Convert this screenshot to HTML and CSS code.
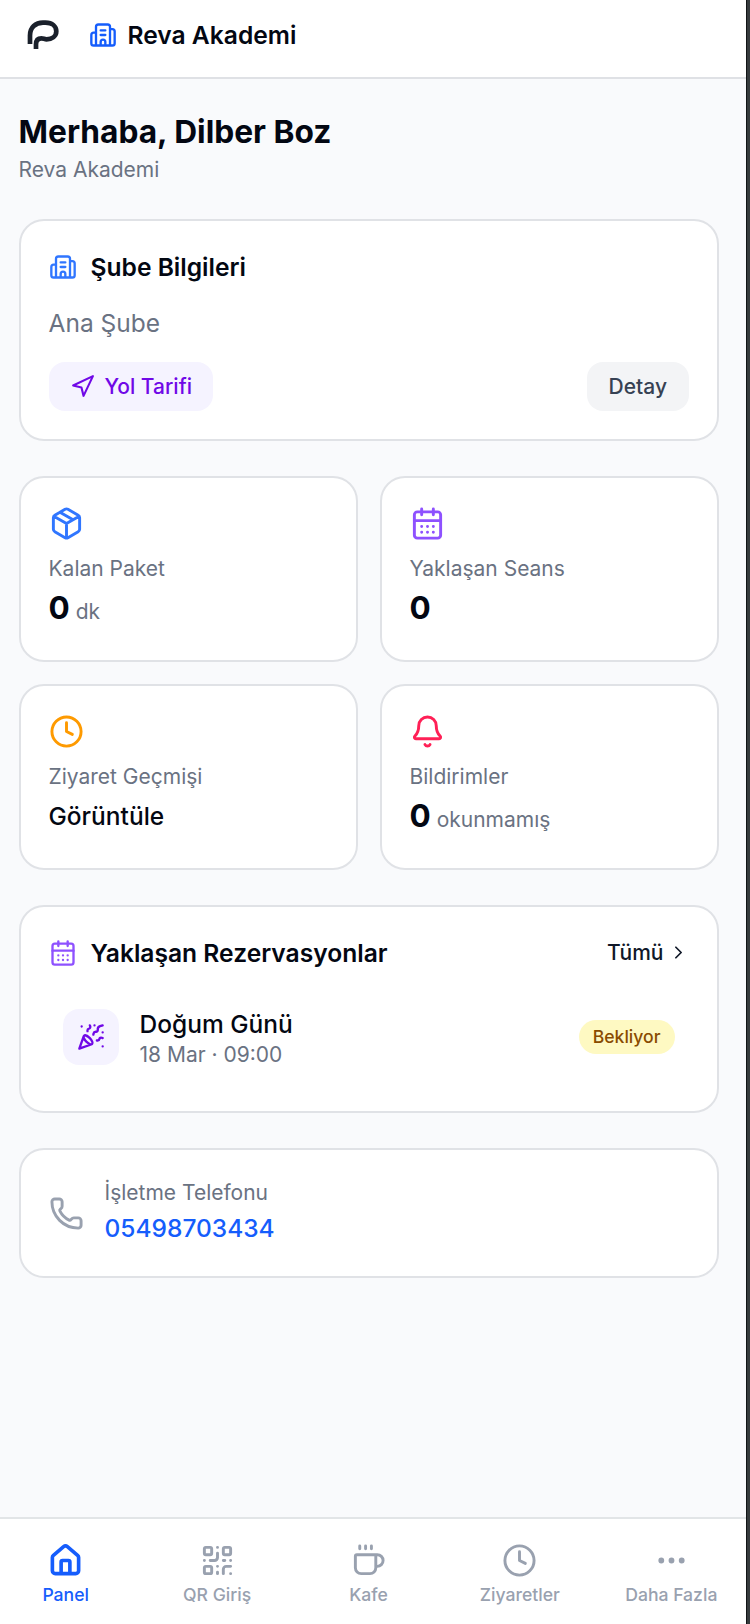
FILE: index.html
```html
<!DOCTYPE html>
<html lang="tr">
<head>
<meta charset="utf-8">
<title>Reva Akademi</title>
<link rel="stylesheet" href="styles.css">
</head>
<body>
<svg class="defs" aria-hidden="true">
  <symbol id="building" viewBox="0 0 24 24"><path d="M10 12h4M10 8h4M14 21v-3a2 2 0 0 0-4 0v3M6 10H4a2 2 0 0 0-2 2v7a2 2 0 0 0 2 2h16a2 2 0 0 0 2-2V9a2 2 0 0 0-2-2h-2M6 21V5a2 2 0 0 1 2-2h8a2 2 0 0 1 2 2v16"/></symbol>
  <symbol id="calendar" viewBox="0 0 24 24"><path d="M8 2v4M16 2v4M3 10h18M8 14h.01M12 14h.01M16 14h.01M8 18h.01M12 18h.01M16 18h.01"/><rect x="3" y="4" width="18" height="18" rx="2"/></symbol>
  <symbol id="clock" viewBox="0 0 24 24"><circle cx="12" cy="12" r="10"/><path d="M12 6v6l4 2"/></symbol>
</svg>
<div class="app">
  <header class="topbar">
    <svg class="logo" viewBox="0 0 32 30"><path d="M3 24V15.500C3 7 8.500 2.700 16 2.700H18.500C25.500 2.700 29.300 6.500 29.300 11.300C29.300 16.200 25 19.300 19.500 19.300C17.500 19.300 16.500 18.400 14.500 18.400C10.500 18.400 9 20.600 9 24.500V29"/></svg>
    <svg class="icon i28 c-blue6"><use href="#building"/></svg>
    <span class="brand">Reva Akademi</span>
  </header>

  <main class="content">
    <div class="greeting">
      <h1>Merhaba, Dilber Boz</h1>
      <p>Reva Akademi</p>
    </div>

    <section class="card branch">
      <div class="card-title"><svg class="icon i28 c-blue5"><use href="#building"/></svg><h2>Şube Bilgileri</h2></div>
      <p class="branch-name">Ana Şube</p>
      <div class="actions">
        <a class="btn violet"><svg class="icon i25" viewBox="0 0 24 24"><path d="M3 11 22 2 13 21 11 13 3 11z"/></svg>Yol Tarifi</a>
        <a class="btn gray">Detay</a>
      </div>
    </section>

    <div class="stats">
      <section class="card stat">
        <svg class="icon i35 c-blue5" viewBox="0 0 24 24"><path d="M11 21.730a2 2 0 0 0 2 0l7-4A2 2 0 0 0 21 16V8a2 2 0 0 0-1-1.730l-7-4a2 2 0 0 0-2 0l-7 4A2 2 0 0 0 3 8v8a2 2 0 0 0 1 1.730zM12 22V12M3.290 7 12 12l8.710-5M7.500 4.270l9 5.150"/></svg>
        <p class="label">Kalan Paket</p>
        <p class="value"><b>0</b> dk</p>
      </section>
      <section class="card stat">
        <svg class="icon i35 c-violet5"><use href="#calendar"/></svg>
        <p class="label">Yaklaşan Seans</p>
        <p class="value"><b>0</b></p>
      </section>
      <section class="card stat">
        <svg class="icon i35 c-amber"><use href="#clock"/></svg>
        <p class="label">Ziyaret Geçmişi</p>
        <p class="value link">Görüntüle</p>
      </section>
      <section class="card stat">
        <svg class="icon i35 c-rose" viewBox="0 0 24 24"><path d="M10.268 21a2 2 0 0 0 3.464 0M3.262 15.326A1 1 0 0 0 4 17h16a1 1 0 0 0 .740-1.673C19.410 13.956 18 12.499 18 8A6 6 0 0 0 6 8c0 4.499-1.411 5.956-2.738 7.326"/></svg>
        <p class="label">Bildirimler</p>
        <p class="value"><b>0</b> okunmamış</p>
      </section>
    </div>

    <section class="card bookings">
      <div class="card-title"><svg class="icon i28 c-violet5"><use href="#calendar"/></svg><h2>Yaklaşan Rezervasyonlar</h2>
        <a class="all">Tümü<svg class="icon i21" viewBox="0 0 24 24"><path d="m9 18 6-6-6-6"/></svg></a></div>
      <div class="booking">
        <div class="tile"><svg class="icon i28" viewBox="0 0 24 24"><path d="M5.800 11.300 2 22l10.700-3.790M4 3h.01M22 8h.01M15 2h.01M22 20h.01M22 2l-2.240.750a2.900 2.900 0 0 0-1.960 3.120c.1.860-.570 1.630-1.450 1.630h-.380c-.860 0-1.600.6-1.760 1.440L14 10M22 13l-.820-.330c-.860-.340-1.820.2-1.980 1.110c-.110.7-.720 1.220-1.430 1.220H17M11 2l.330.820c.340.860-.2 1.820-1.110 1.980C9.520 4.900 9 5.520 9 6.230V7M11 13c1.930 1.930 2.830 4.170 2 5-.830.830-3.070-.070-5-2-1.930-1.930-2.830-4.170-2-5 .830-.830 3.070.070 5 2Z"/></svg></div>
        <div class="booking-text"><h3>Doğum Günü</h3><p>18 Mar · 09:00</p></div>
        <span class="badge">Bekliyor</span>
      </div>
    </section>

    <section class="card phone">
      <svg class="icon i35 c-gray" viewBox="0 0 24 24"><path d="M13.832 16.568a1 1 0 0 0 1.213-.303l.355-.465A2 2 0 0 1 17 15h3a2 2 0 0 1 2 2v3a2 2 0 0 1-2 2A18 18 0 0 1 2 4a2 2 0 0 1 2-2h3a2 2 0 0 1 2 2v3a2 2 0 0 1-.8 1.600l-.468.351a1 1 0 0 0-.292 1.233 14 14 0 0 0 6.392 6.384"/></svg>
      <div><p class="label">İşletme Telefonu</p><a class="number">05498703434</a></div>
    </section>
  </main>

  <nav class="tabs">
    <div class="tab-row">
      <a class="tab active"><svg class="icon i35 bold" viewBox="0 0 24 24"><path d="M15 21v-8a1 1 0 0 0-1-1h-4a1 1 0 0 0-1 1v8M3 10a2 2 0 0 1 .709-1.528l7-5.999a2 2 0 0 1 2.582 0l7 5.999A2 2 0 0 1 21 10v9a2 2 0 0 1-2 2H5a2 2 0 0 1-2-2z"/></svg>Panel</a>
      <a class="tab"><svg class="icon i35" viewBox="0 0 24 24"><rect x="3" y="3" width="5" height="5" rx="1"/><rect x="16" y="3" width="5" height="5" rx="1"/><rect x="3" y="16" width="5" height="5" rx="1"/><path d="M21 16h-3a2 2 0 0 0-2 2v3M21 21v.01M12 7v3a2 2 0 0 1-2 2H7M3 12h.01M12 3h.01M12 16v.01M16 12h1M21 12v.01M12 21v-1"/></svg>QR Giriş</a>
      <a class="tab"><svg class="icon i35" viewBox="0 0 24 24"><path d="M10 2v2M14 2v2M6 2v2M16 8a1 1 0 0 1 1 1v8a4 4 0 0 1-4 4H7a4 4 0 0 1-4-4V9a1 1 0 0 1 1-1h14a4 4 0 1 1 0 8h-1"/></svg>Kafe</a>
      <a class="tab"><svg class="icon i35"><use href="#clock"/></svg>Ziyaretler</a>
      <a class="tab"><svg class="icon i35" viewBox="0 0 24 24"><circle cx="12" cy="12" r="1"/><circle cx="19" cy="12" r="1"/><circle cx="5" cy="12" r="1"/></svg>Daha Fazla</a>
    </div>
  </nav>
</div>
</body>
</html>
```
FILE: styles.css
```css
* { box-sizing: border-box; }
body { margin: 0; background: #363b3d; font-family: Inter, sans-serif; color: #030712; }
h1, h2, h3, p { margin: 0; }
.defs { display: none; }
.app { width: 747px; height: 1624px; border-right: 1px solid #111416; background: #f9fafc; display: flex; flex-direction: column; overflow: hidden; }
.icon { display: block; flex: none; fill: none; stroke: currentColor; stroke-width: 2; stroke-linecap: round; stroke-linejoin: round; }
.i21 { width: 21px; height: 21px; }
.i25 { width: 25px; height: 25px; }
.i28 { width: 28px; height: 28px; }
.i35 { width: 35px; height: 35px; }
.bold { stroke-width: 2.5; }
.c-blue5 { color: #3076ff; }
.c-blue6 { color: #155dfc; }
.c-violet5 { color: #8e51ff; }
.c-amber { color: #fe9a00; }
.c-rose { color: #ff2056; }
.c-gray { color: #99a1af; }

.topbar { height: 79px; flex: none; padding: 0 0 8px 27px; background: #fff; border-bottom: 2px solid #dfe1e5; display: flex; align-items: center; }
.logo { width: 32px; height: 30px; margin-right: 30px; fill: none; stroke: #1a202b; stroke-width: 4.700; }
.brand { margin-left: 10.500px; padding-top: 1px; font-size: 24.600px; font-weight: 600; line-height: 34px; }

.content { flex: 1; padding: 32px 27.500px 0 18.500px; display: flex; flex-direction: column; gap: 35px; }
.greeting { height: 73px; }
.greeting h1 { font-size: 31.700px; font-weight: 700; line-height: 42px; }
.greeting p { padding-top: 1px; font-size: 21px; line-height: 31px; color: #6a7282; }

.card { background: #fff; border: 2px solid #e0e2e6; border-radius: 25px; padding: 28px; }
.card-title { display: flex; align-items: center; height: 35px; }
.card-title h2 { margin-left: 14px; padding-top: 1px; font-size: 24.600px; font-weight: 600; line-height: 34px; }
.branch { height: 222px; }
.branch-name { margin-top: 21px; font-size: 24.500px; line-height: 36px; color: #6a7282; }
.actions { margin-top: 21px; display: flex; justify-content: space-between; }
.btn { height: 49px; padding: 0 21.500px; border-radius: 16px; display: flex; align-items: center; gap: 10px; font-size: 21px; font-weight: 500; }
.violet { padding-left: 21px; background: #f5f3ff; color: #7008e7; }
.gray { background: #f3f4f6; color: #364153; }

.stats { display: grid; grid-template-columns: 1fr 1fr; gap: 22px; }
.stat { height: 186px; }
.label { font-size: 21px; line-height: 30px; color: #6a7282; }
.stat .label { margin-top: 13px; }
.value { margin-top: 4px; font-size: 21px; line-height: 40px; color: #6a7282; }
.value b { font-size: 31.500px; font-weight: 700; color: #030712; }
.value.link { font-size: 24.500px; font-weight: 500; color: #030712; }

.bookings { height: 208px; }
.all { margin: 0 0 0 auto; display: flex; align-items: center; gap: 4px; font-size: 21px; font-weight: 500; color: #101828; }
.booking { margin-top: 21px; padding: 14px; display: flex; align-items: center; }
.tile { width: 56px; height: 56px; border-radius: 16px; background: #f5f3ff; color: #7008e7; display: grid; place-items: center; }
.booking-text { margin-left: 21px; padding-top: 2px; }
.booking-text h3 { font-size: 24.500px; font-weight: 500; line-height: 34px; }
.booking-text p { font-size: 21px; line-height: 28px; color: #6a7282; }
.badge { margin-left: auto; height: 34px; padding: 0 14px; border-radius: 17px; background: #fef9c2; color: #894b00; font-size: 17.600px; font-weight: 500; line-height: 34px; }

.phone { height: 130px; padding: 0 28px; display: flex; align-items: center; gap: 21px; }
.number { display: block; margin-top: 2px; padding-bottom: 2px; font-size: 24.500px; font-weight: 500; line-height: 36px; color: #155dfc; }

.tabs { height: 107px; flex: none; background: #fff; border-top: 2px solid #e2e5e7; }
.tab-row { width: 757px; margin-left: -10px; padding-top: 24px; display: grid; grid-template-columns: repeat(5, 1fr); }
.tab { display: flex; flex-direction: column; align-items: center; gap: 5px; color: #99a1af; font-size: 17.600px; font-weight: 500; line-height: 24px; }
.tab.active { color: #155dfc; }
```
